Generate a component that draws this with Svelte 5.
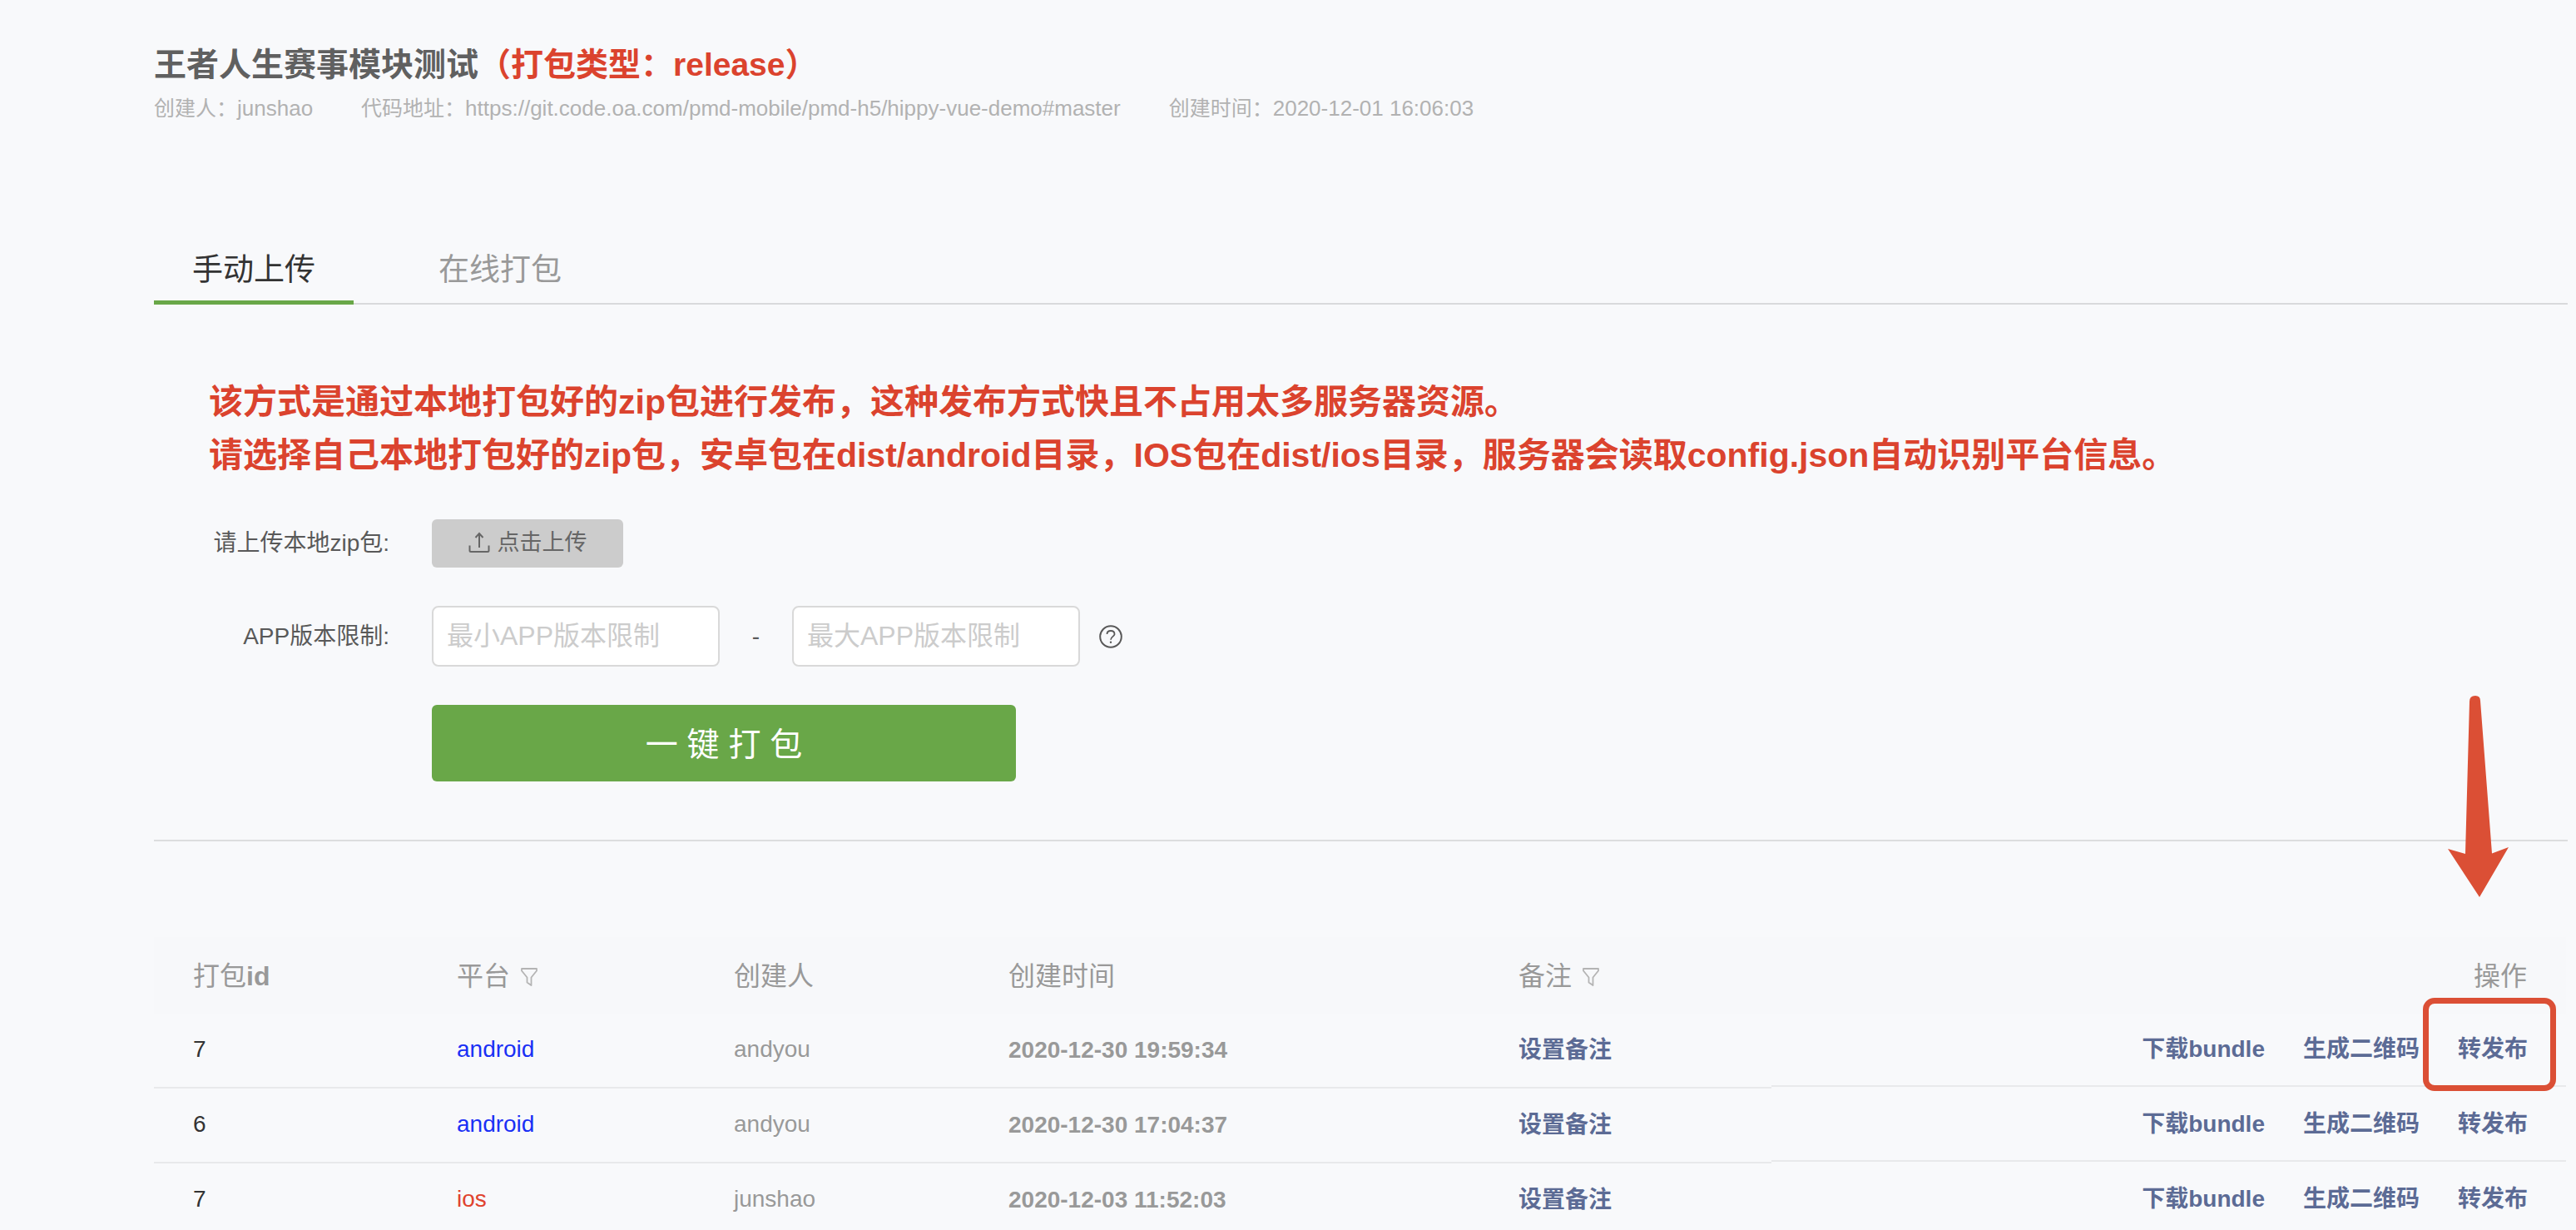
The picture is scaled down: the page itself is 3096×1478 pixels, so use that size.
<script lang="ts">
  const rows = [
    { id: '7', platform: 'android', creator: 'andyou', time: '2020-12-30 19:59:34', marked: true },
    { id: '6', platform: 'android', creator: 'andyou', time: '2020-12-30 17:04:37', marked: false },
    { id: '7', platform: 'ios', creator: 'junshao', time: '2020-12-03 11:52:03', marked: false },
  ];
  let tab = $state('manual');
</script>

{#snippet funnel()}
  <svg class="funnel" viewBox="0 0 22 24" aria-hidden="true">
    <path d="M2 2H20V4.500L13.500 12.500V22L8.500 18.500V12.500L2 4.500Z" fill="none" stroke="currentColor" stroke-width="1.8" stroke-linejoin="round" />
  </svg>
{/snippet}

<main class="page">
  <header>
    <h1>王者人生赛事模块测试<span class="red">（打包类型：release）</span></h1>
    <p class="meta">
      <span><span class="key">创建人：</span>junshao</span>
      <span><span class="key">代码地址：</span>https://git.code.oa.com/pmd-mobile/pmd-h5/hippy-vue-demo#master</span>
      <span><span class="key">创建时间：</span>2020-12-01 16:06:03</span>
    </p>
  </header>

  <div class="tabs" role="tablist">
    <button class="tab" class:active={tab === 'manual'} role="tab" aria-selected={tab === 'manual'} onclick={() => (tab = 'manual')}>手动上传</button>
    <button class="tab" class:active={tab === 'online'} role="tab" aria-selected={tab === 'online'} onclick={() => (tab = 'online')}>在线打包</button>
  </div>

  <section class="panel">
    <p class="notice">
      该方式是通过本地打包好的zip包进行发布，这种发布方式快且不占用太多服务器资源。<br />
      请选择自己本地打包好的zip包，安卓包在dist/android目录，IOS包在dist/ios目录，服务器会读取config.json自动识别平台信息。
    </p>

    <form class="form" onsubmit={(e) => e.preventDefault()}>
      <label class="label" for="upload">请上传本地zip包:</label>
      <div class="field">
        <button id="upload" type="button" class="upload">
          <svg class="upload-icon" viewBox="0 0 26 28" aria-hidden="true">
            <path d="M13 20V4M8.500 8L13 3L17.500 8M1.500 17.500V23.500Q1.500 25 3 25H23Q24.500 25 24.500 23.500V17.500" fill="none" stroke="currentColor" stroke-width="2" />
          </svg>
          点击上传
        </button>
      </div>

      <label class="label" for="min">APP版本限制:</label>
      <div class="field range">
        <input id="min" type="text" placeholder="最小APP版本限制" />
        <span class="dash">-</span>
        <input type="text" aria-label="最大APP版本限制" placeholder="最大APP版本限制" />
        <svg class="help" viewBox="0 0 28 28" aria-hidden="true">
          <circle cx="14" cy="14" r="12.8" fill="none" stroke="currentColor" stroke-width="2" />
          <path d="M9.500 11C9.500 8.500 11.500 7 14 7S18.500 8.500 18.500 10.900C18.500 14 14 13.800 14 17.700" fill="none" stroke="currentColor" stroke-width="1.8" />
          <circle cx="14" cy="20.700" r="1.200" fill="currentColor" />
        </svg>
      </div>

      <div class="field submit-row">
        <button type="submit" class="submit">一 键 打 包</button>
      </div>
    </form>
  </section>

  <div class="table-wrap">
    <svg class="arrow" viewBox="0 0 73 242" aria-hidden="true">
      <path d="M26 7Q26 0 33 0Q39 0 39 6L53 189.500L73 182L38 242L0 184L21 190Z" />
    </svg>
    <table>
      <colgroup>
        <col class="c-id" /><col class="c-platform" /><col class="c-creator" /><col class="c-time" /><col class="c-note" /><col />
      </colgroup>
      <thead>
        <tr>
          <th scope="col">打包<b>id</b></th>
          <th scope="col">平台{@render funnel()}</th>
          <th scope="col">创建人</th>
          <th scope="col">创建时间</th>
          <th scope="col">备注{@render funnel()}</th>
          <th scope="col" class="right">操作</th>
        </tr>
      </thead>
      <tbody>
        {#each rows as row}
          <tr>
            <td class="plain id">{row.id}</td>
            <td class="plain {row.platform}">{row.platform}</td>
            <td class="plain">{row.creator}</td>
            <td class="time">{row.time}</td>
            <td><a href="#note">设置备注</a></td>
            <td class="ops">
              <div class="actions">
                <a href="#bundle">下载bundle</a>
                <a href="#qrcode">生成二维码</a>
                <a href="#publish" class:marked={row.marked}>转发布</a>
              </div>
            </td>
          </tr>
        {/each}
      </tbody>
    </table>
  </div>
</main>

<style>
  :global(body) {
    margin: 0;
    background: #f8f9fb;
  }
  .page {
    box-sizing: border-box;
    height: 100vh;
    overflow: hidden;
    padding: 48px 10px 0 185px;
    font-family: "Liberation Sans", "Noto Sans CJK SC", sans-serif;
    color: #595959;
  }
  .page :is(button, input) {
    font-family: inherit;
    margin: 0;
  }
  h1 {
    margin: 0;
    font-size: 39px;
    line-height: 60px;
    font-weight: 700;
    color: #606060;
  }
  .red {
    color: #db432e;
  }
  .meta {
    display: flex;
    gap: 58px;
    margin: 0;
    padding-top: 2px;
    font-size: 26px;
    line-height: 40px;
    color: #b2b2b2;
  }
  .key {
    font-size: 25px;
  }
  .tabs {
    display: flex;
    gap: 56px;
    height: 88px;
    margin-top: 128px;
    border-bottom: 2px solid #d9dadc;
    box-sizing: border-box;
  }
  .tab {
    box-sizing: content-box;
    height: 73px;
    padding: 10px 46px 0;
    border: 0;
    border-bottom: 5px solid transparent;
    background: none;
    font-size: 37px;
    line-height: 73px;
    color: #999;
  }
  .tab.active {
    color: #333;
    border-bottom-color: #69a748;
  }
  .panel {
    padding: 85px 0 70px;
    border-bottom: 2px solid #dcddde;
  }
  .notice {
    margin: 0 0 0 66px;
    font-size: 41px;
    line-height: 64px;
    font-weight: 700;
    color: #db432e;
  }
  .form {
    display: grid;
    grid-template-columns: 283px 1fr;
    column-gap: 51px;
    row-gap: 46px;
    align-items: center;
    margin-top: 45px;
  }
  .label {
    text-align: right;
    font-size: 28px;
    line-height: 40px;
  }
  .field {
    display: flex;
    align-items: center;
  }
  .upload {
    display: flex;
    align-items: center;
    justify-content: center;
    gap: 9px;
    width: 230px;
    height: 58px;
    padding-bottom: 3px;
    border: 0;
    border-radius: 6px;
    background: #ccc;
    color: #666;
    font-size: 27px;
    line-height: 40px;
  }
  .upload-icon {
    width: 26px;
    height: 28px;
  }
  input {
    box-sizing: border-box;
    width: 346px;
    height: 73px;
    padding: 0 16px;
    border: 2px solid #d9d9d9;
    border-radius: 8px;
    background: #fff;
    font-size: 32px;
    color: #333;
  }
  input::placeholder {
    color: #ccc;
    opacity: 1;
  }
  .dash {
    width: 87px;
    text-align: center;
    font-size: 28px;
  }
  .help {
    width: 28px;
    height: 28px;
    margin-left: 23px;
  }
  .submit-row {
    grid-column: 2;
  }
  .submit {
    width: 702px;
    height: 92px;
    padding-bottom: 5px;
    border: 0;
    border-radius: 6px;
    background: #69a748;
    color: #fff;
    font-size: 39px;
  }
  .table-wrap {
    position: relative;
    margin: 115px 2px 0 0;
  }
  table {
    width: 100%;
    table-layout: fixed;
    border-collapse: separate;
    border-spacing: 0;
  }
  .c-id { width: 317px; }
  .c-platform { width: 333px; }
  .c-creator { width: 330px; }
  .c-time { width: 613px; }
  .c-note { width: 351px; }
  th {
    box-sizing: border-box;
    height: 92px;
    padding: 0 47px 5px;
    background: #f7f8fa;
    text-align: left;
    font-size: 32px;
    font-weight: 400;
    color: #999;
  }
  th.right {
    text-align: right;
  }
  .funnel {
    width: 22px;
    height: 24px;
    margin-left: 12px;
    vertical-align: -2px;
    color: #b4b4b4;
  }
  td {
    box-sizing: border-box;
    height: 90px;
    padding: 0 47px;
    border-bottom: 2px solid #e8e9eb;
    font-size: 28px;
    line-height: 40px;
    color: #999;
  }
  .plain { padding-bottom: 3px; }
  .id { color: #333; }
  .android { color: #1a30f5; }
  .ios { color: #e0432e; }
  .time { font-weight: 700; }
  td.ops {
    padding: 0;
    border-bottom: 0;
    vertical-align: top;
  }
  .actions {
    box-sizing: border-box;
    display: flex;
    align-items: center;
    justify-content: flex-end;
    gap: 46px;
    height: 88px;
    padding-right: 46px;
    border-bottom: 2px solid #e8e9eb;
  }
  a {
    font-size: 28px;
    font-weight: 700;
    color: #5c6b95;
    text-decoration: none;
  }
  .marked {
    position: relative;
  }
  .marked::after {
    content: "";
    position: absolute;
    inset: -42px -34px -30px -42px;
    border: 7px solid #db4f35;
    border-radius: 14px;
    pointer-events: none;
  }
  .arrow {
    position: absolute;
    top: -290px;
    right: 69px;
    width: 73px;
    height: 242px;
    fill: #db4f35;
  }
</style>
